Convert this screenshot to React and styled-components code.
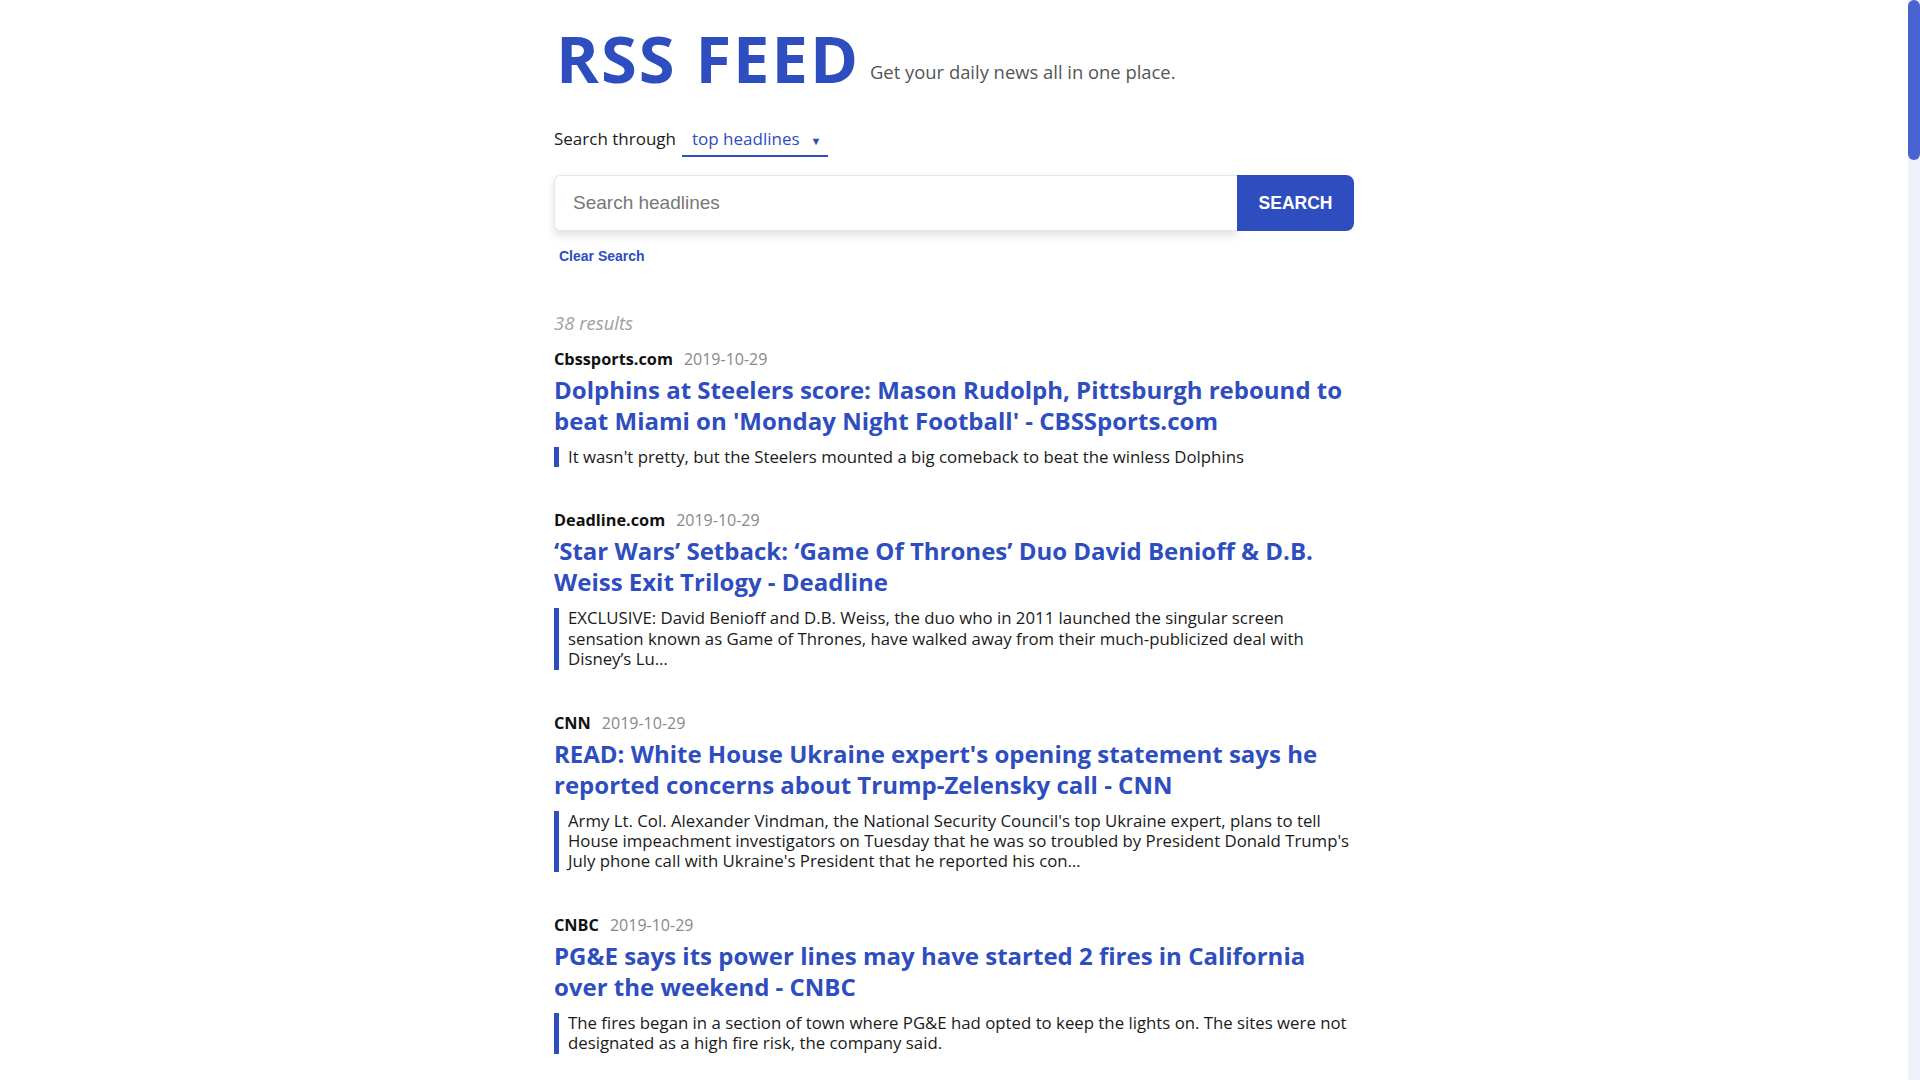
import React from "react";
import styled, { createGlobalStyle } from "styled-components";

const Global = createGlobalStyle`
  html, body { margin: 0; padding: 0; background: #ffffff; }
  body { font-family: "Open Sans", Lato, sans-serif; color: #1a1a1a; }
`;

const BLUE = "#2e4dbf";

const Root = styled.div`
  padding-right: 12px;
`;

const ScrollTrack = styled.div`
  position: fixed;
  top: 0;
  right: 0;
  bottom: 0;
  width: 12px;
  background: #eef0fa;
`;

const ScrollThumb = styled.div`
  width: 12px;
  height: 160px;
  border-radius: 6px;
  background: #4864d3;
`;

const Page = styled.main`
  width: 800px;
  margin: 0 auto;
  padding: 26px 0 40px;
`;

const Header = styled.header`
  display: flex;
  align-items: flex-end;
  gap: 10px;
`;

const Title = styled.h1`
  margin: 0 0 0 2px;
  font-family: "Open Sans", sans-serif;
  font-weight: 700;
  font-size: 65px;
  line-height: 1;
  color: ${BLUE};
  letter-spacing: 2px;
`;

const Tagline = styled.span`
  font-size: 18.4px;
  line-height: 1;
  color: #555;
  margin-bottom: 10px;
`;

const FilterRow = styled.div`
  display: flex;
  align-items: baseline;
  gap: 6px;
  margin-top: 32px;
`;

const FilterLabel = styled.span`
  font-size: 17px;
  color: #1a1a1a;
`;

const Dropdown = styled.button`
  display: inline-flex;
  align-items: baseline;
  gap: 11px;
  padding: 4px 7px 2px 10px;
  border: none;
  border-bottom: 2px solid ${BLUE};
  background: transparent;
  font-family: "Open Sans", sans-serif;
  font-size: 17px;
  line-height: 24px;
  color: ${BLUE};
  cursor: pointer;
`;

const Caret = styled.span`
  font-size: 11px;
  color: ${BLUE};
`;

const SearchForm = styled.form`
  display: flex;
  height: 56px;
  margin-top: 18px;
`;

const SearchInput = styled.input`
  flex: 1;
  min-width: 0;
  border: 1px solid #e6e6e6;
  border-right: none;
  border-radius: 6px 0 0 6px;
  padding: 0 18px;
  font-family: "Liberation Sans", Arial, sans-serif;
  font-size: 19px;
  color: #222;
  box-shadow: 0 4px 10px rgba(0, 0, 0, 0.13);
  outline: none;
  &::placeholder { color: #777; }
`;

const SearchButton = styled.button`
  width: 117px;
  border: none;
  border-radius: 0 8px 8px 0;
  background: ${BLUE};
  color: #fff;
  font-family: "Liberation Sans", Arial, sans-serif;
  font-weight: 700;
  font-size: 17.5px;
  cursor: pointer;
`;

const ClearButton = styled.button`
  display: block;
  margin-top: 17px;
  padding: 0 0 0 5px;
  border: none;
  background: transparent;
  font-family: "Liberation Sans", Arial, sans-serif;
  font-weight: 700;
  font-size: 14px;
  line-height: 16px;
  color: ${BLUE};
  cursor: pointer;
`;

const ResultCount = styled.p`
  margin: 49px 0 16px;
  font-size: 18.5px;
  line-height: 20px;
  font-style: italic;
  color: #a0a0a0;
`;

const Article = styled.article`
  margin-bottom: 43px;
`;

const Meta = styled.div`
  display: flex;
  align-items: baseline;
  gap: 11px;
  line-height: 20px;
`;

const Source = styled.span`
  font-weight: 700;
  font-size: 16.3px;
  color: #111;
`;

const DateText = styled.span`
  font-size: 16px;
  color: #888;
`;

const Headline = styled.a`
  display: block;
  margin-top: 5px;
  font-weight: 700;
  font-size: 24px;
  line-height: 31px;
  color: ${BLUE};
  text-decoration: none;
`;

const Description = styled.p`
  margin: 11px 0 0;
  padding-left: 9px;
  border-left: 5px solid ${BLUE};
  font-size: 16.8px;
  line-height: 20.4px;
  color: #1a1a1a;
`;

const base = [
  {
    source: "Cbssports.com",
    title:
      "Dolphins at Steelers score: Mason Rudolph, Pittsburgh rebound to beat Miami on 'Monday Night Football' - CBSSports.com",
    desc: "It wasn't pretty, but the Steelers mounted a big comeback to beat the winless Dolphins",
  },
  {
    source: "Deadline.com",
    title:
      "\u2018Star Wars\u2019 Setback: \u2018Game Of Thrones\u2019 Duo David Benioff & D.B. Weiss Exit Trilogy - Deadline",
    desc: "EXCLUSIVE: David Benioff and D.B. Weiss, the duo who in 2011 launched the singular screen sensation known as Game of Thrones, have walked away from their much-publicized deal with Disney\u2019s Lu\u2026",
  },
  {
    source: "CNN",
    title:
      "READ: White House Ukraine expert's opening statement says he reported concerns about Trump-Zelensky call - CNN",
    desc: "Army Lt. Col. Alexander Vindman, the National Security Council's top Ukraine expert, plans to tell House impeachment investigators on Tuesday that he was so troubled by President Donald Trump's July phone call with Ukraine's President that he reported his con\u2026",
  },
  {
    source: "CNBC",
    title:
      "PG&E says its power lines may have started 2 fires in California over the weekend - CNBC",
    desc: "The fires began in a section of town where PG&E had opted to keep the lights on. The sites were not designated as a high fire risk, the company said.",
  },
];

const articles = Array.from({ length: 38 }, (_, i) => ({
  ...base[i % base.length],
  date: "2019-10-29",
  id: i,
}));

export default function App() {
  return (
    <Root>
      <Global />
      <Page>
        <Header>
          <Title>RSS FEED</Title>
          <Tagline>Get your daily news all in one place.</Tagline>
        </Header>
        <FilterRow>
          <FilterLabel>Search through</FilterLabel>
          <Dropdown type="button">
            top headlines <Caret>▼</Caret>
          </Dropdown>
        </FilterRow>
        <SearchForm onSubmit={(e) => e.preventDefault()}>
          <SearchInput placeholder="Search headlines" />
          <SearchButton type="submit">SEARCH</SearchButton>
        </SearchForm>
        <ClearButton type="button">Clear Search</ClearButton>
        <ResultCount>38 results</ResultCount>
        {articles.map((a) => (
          <Article key={a.id}>
            <Meta>
              <Source>{a.source}</Source>
              <DateText>{a.date}</DateText>
            </Meta>
            <Headline href="#">{a.title}</Headline>
            <Description>{a.desc}</Description>
          </Article>
        ))}
      </Page>
      <ScrollTrack>
        <ScrollThumb />
      </ScrollTrack>
    </Root>
  );
}
